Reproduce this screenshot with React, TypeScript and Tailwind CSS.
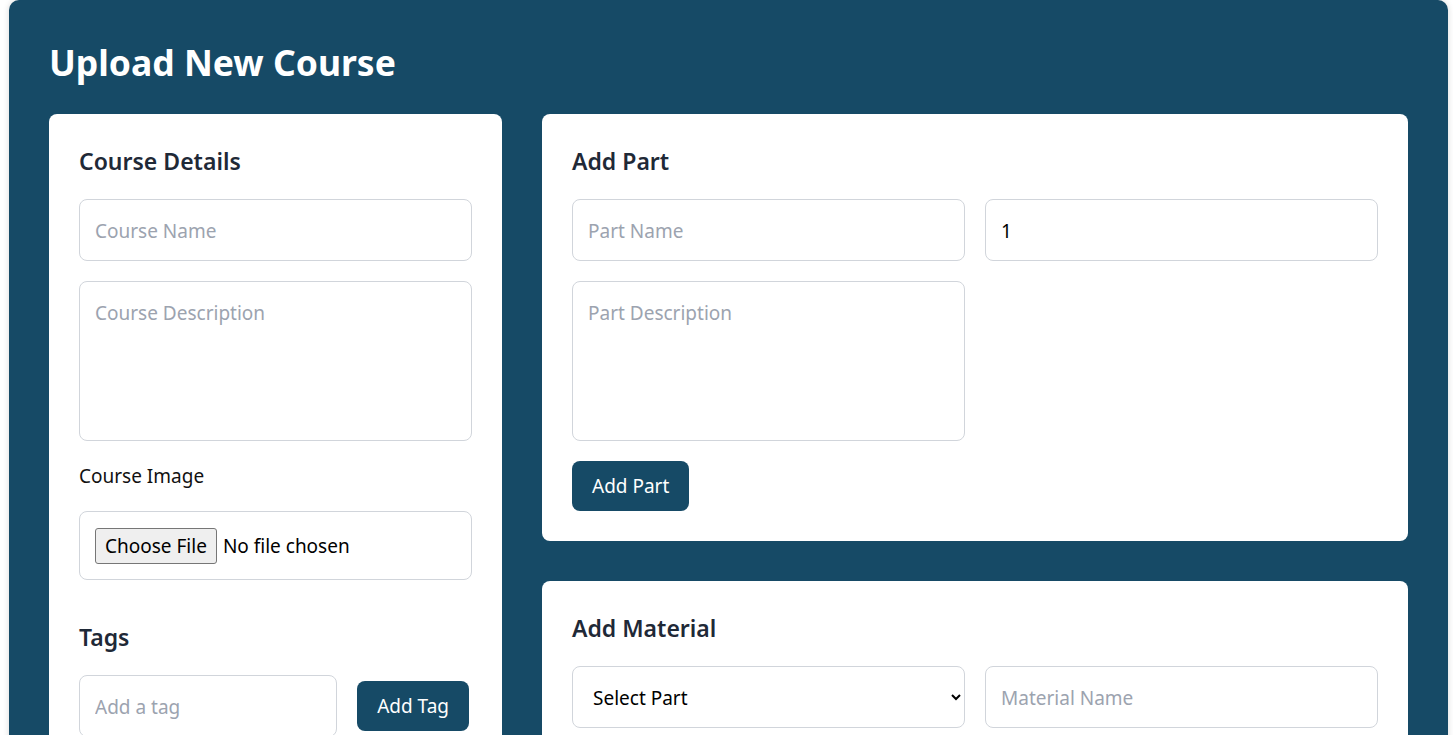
import { useState } from "react";

const field =
  "w-full rounded-lg border border-[#d1d5db] bg-white px-[15px] pt-[16px] pb-[14px] text-[19px] leading-[30px] text-black placeholder:text-[#9ca3af] outline-none";

const button =
  "rounded-lg bg-[#164a66] px-5 py-[10px] text-[19px] leading-[30px] text-white";

function CardTitle({ children }: { children: string }) {
  return (
    <h2 className="mb-5 text-[23px] leading-[35px] font-semibold text-[#1f2937]">
      {children}
    </h2>
  );
}

export default function App() {
  const [tag, setTag] = useState("");

  return (
    <div
      className="min-h-screen bg-white pl-[9px] pr-[5px]"
      style={{ fontFamily: '"Noto Sans", "Open Sans", sans-serif' }}
    >
      <div className="rounded-t-[10px] bg-[#164a66] px-10 pt-10 pb-10 shadow-[0_0_6px_rgba(0,0,0,0.15)]">
        <h1 className="mb-[29px] text-[35.5px] leading-[45px] font-bold text-white">
          Upload New Course
        </h1>

        <div className="flex items-start gap-10">
          {/* course details */}
          <div className="w-1/3 shrink-0 rounded-lg bg-white p-[30px]">
            <CardTitle>Course Details</CardTitle>
            <div className="flex flex-col gap-5">
              <input className={field} placeholder="Course Name" />
              <textarea
                className={`${field} h-[160px] resize-none`}
                placeholder="Course Description"
              />
              <label className="text-[19px] leading-[30px] text-[#111]">
                Course Image
              </label>
              <input
                type="file"
                className="w-full rounded-lg border border-[#d1d5db] px-[15px] pt-[16px] pb-[15px] text-[19px] leading-[30px] text-black file:mr-[6px] file:rounded-[3px] file:border file:border-solid file:border-[#767676] file:bg-[#efefef] file:px-[9px] file:py-[2px] file:leading-[30px]"
              />
            </div>

            <div className="mt-10">
              <CardTitle>Tags</CardTitle>
              <div className="flex items-center gap-5 pr-[3px]">
                <input
                  className={`${field} flex-1`}
                  placeholder="Add a tag"
                  value={tag}
                  onChange={e => setTag(e.target.value)}
                />
                <button className={`${button} shrink-0`}>Add Tag</button>
              </div>
              <div className="mt-5 flex flex-wrap gap-2" />
            </div>

            <div className="mt-10">
              <button className={`${button} w-full`}>Upload Course</button>
            </div>
          </div>

          <div className="flex min-w-0 flex-1 flex-col gap-10">
            {/* add part */}
            <div className="rounded-lg bg-white p-[30px]">
              <CardTitle>Add Part</CardTitle>
              <div className="grid grid-cols-2 gap-5">
                <input className={field} placeholder="Part Name" />
                <input type="number" className={field} defaultValue={1} />
                <textarea
                  className={`${field} h-[160px] resize-none`}
                  placeholder="Part Description"
                />
              </div>
              <button className={`${button} mt-5`}>Add Part</button>
            </div>

            {/* add material */}
            <div className="rounded-lg bg-white p-[30px]">
              <CardTitle>Add Material</CardTitle>
              <div className="grid grid-cols-2 gap-5">
                <select className={`${field} px-[16px]`} defaultValue="">
                  <option value="">Select Part</option>
                  <option value="1">Part 1</option>
                </select>
                <input className={field} placeholder="Material Name" />
                <select className={field} defaultValue="video">
                  <option value="video">Video</option>
                  <option value="pdf">PDF</option>
                </select>
                <input className={field} placeholder="Material URL" />
              </div>
              <button className={`${button} mt-5`}>Add Material</button>
            </div>
          </div>
        </div>
      </div>
    </div>
  );
}
